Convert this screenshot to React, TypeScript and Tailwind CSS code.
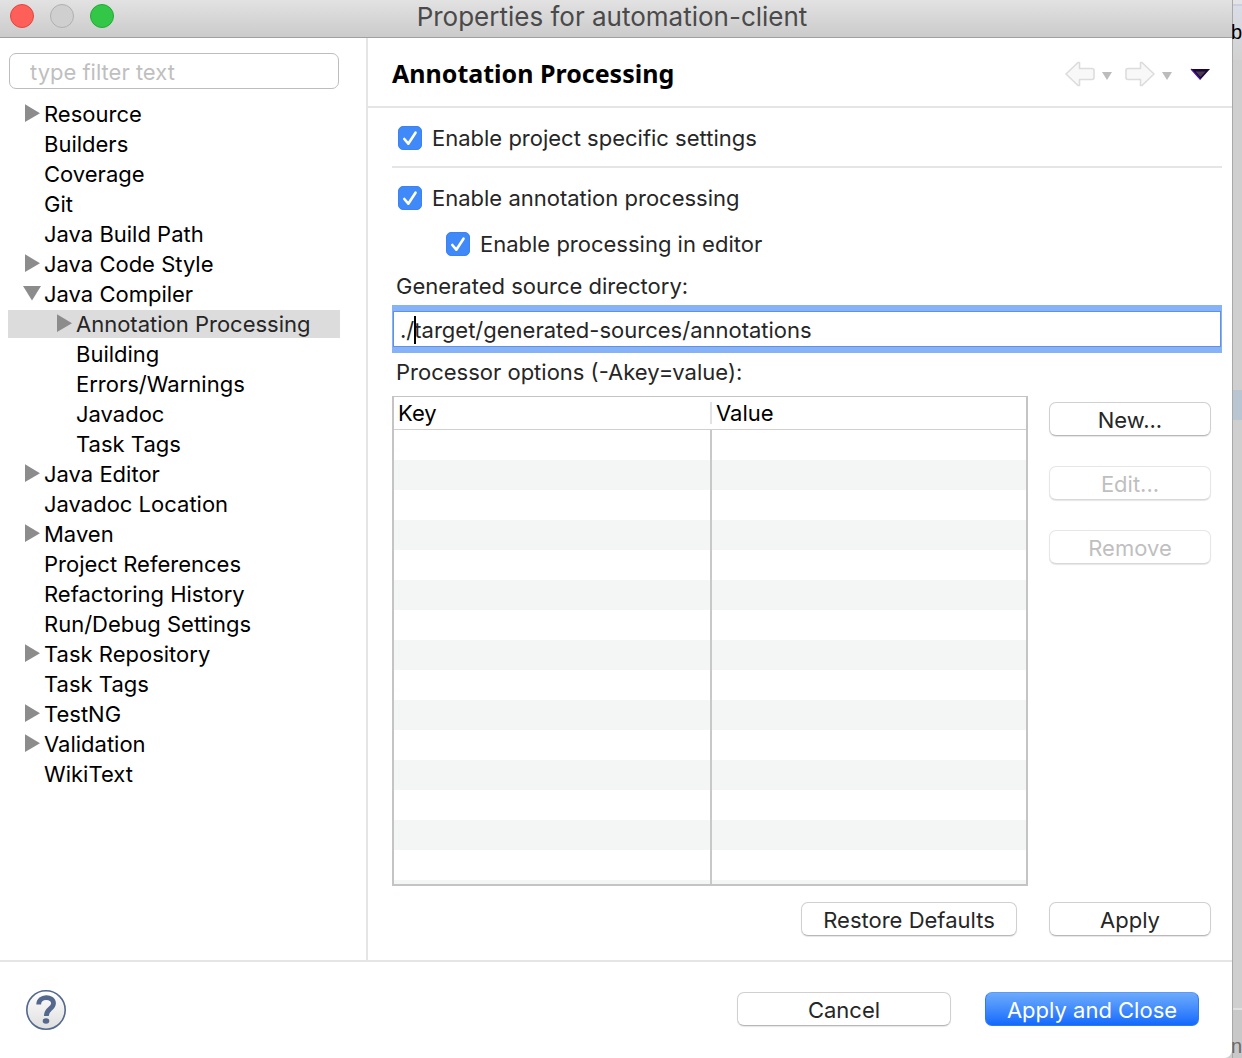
import React from "react";

type Node = { label: string; level?: number; state?: "closed" | "open"; selected?: boolean };

const tree: Node[] = [
  { label: "Resource", state: "closed" },
  { label: "Builders" },
  { label: "Coverage" },
  { label: "Git" },
  { label: "Java Build Path" },
  { label: "Java Code Style", state: "closed" },
  { label: "Java Compiler", state: "open" },
  { label: "Annotation Processing", level: 1, state: "closed", selected: true },
  { label: "Building", level: 1 },
  { label: "Errors/Warnings", level: 1 },
  { label: "Javadoc", level: 1 },
  { label: "Task Tags", level: 1 },
  { label: "Java Editor", state: "closed" },
  { label: "Javadoc Location" },
  { label: "Maven", state: "closed" },
  { label: "Project References" },
  { label: "Refactoring History" },
  { label: "Run/Debug Settings" },
  { label: "Task Repository", state: "closed" },
  { label: "Task Tags" },
  { label: "TestNG", state: "closed" },
  { label: "Validation", state: "closed" },
  { label: "WikiText" },
];

function Disclosure({ state }: { state?: "closed" | "open" }) {
  return (
    <svg viewBox="0 0 20 28" className="h-7 w-5 shrink-0 overflow-visible" aria-hidden="true">
      {state === "closed" && <path d="M1 4.300 L16 13.200 L1 22Z" fill="#8c8c8c" />}
      {state === "open" && <path d="M-1 6 L17 6 L8 20.500Z" fill="#8c8c8c" />}
    </svg>
  );
}

function Check({ id, label }: { id: string; label: string }) {
  return (
    <div className="flex h-6 items-center gap-[10px]">
      <span className="relative block size-6">
        <input
          id={id}
          type="checkbox"
          defaultChecked
          className="peer block size-6 appearance-none rounded-[5px] border border-[#b9b9b9] bg-white checked:border-[#3b82f2] checked:bg-[#3f89f8]"
        />
        <svg viewBox="0 0 24 24" className="pointer-events-none absolute inset-0 hidden size-6 peer-checked:block" aria-hidden="true">
          <path d="M6.300 13 L10.300 17.700 L17.500 6.700" fill="none" stroke="#fff" strokeWidth="2.600" strokeLinecap="round" strokeLinejoin="round" />
        </svg>
      </span>
      <label htmlFor={id} className="whitespace-nowrap">
        {label}
      </label>
    </div>
  );
}

function PushButton({ children, className, disabled }: { children: React.ReactNode; className: string; disabled?: boolean }) {
  return (
    <button
      type="button"
      disabled={disabled}
      className={
        "flex h-[34px] items-center justify-center whitespace-nowrap rounded-[7px] border border-[#d0d0d0] border-b-[#b8b8b8] bg-white pt-[2px] text-[#262626] shadow-[0_1px_1px_rgba(0,0,0,0.1)] disabled:border-[#e6e6e6] disabled:border-b-[#d8d8d8] disabled:text-[#bfbfbf] " +
        className
      }
    >
      {children}
    </button>
  );
}

function HistoryArrow({ label, flip }: { label: string; flip?: boolean }) {
  return (
    <button type="button" disabled aria-label={label} className="flex h-7 items-center">
      <svg viewBox="0 0 48 28" className="h-7 w-12" aria-hidden="true">
        <path
          d="M1 14 L13 2.500 H14.500 V8.500 H27 Q29 8.500 29 10.500 V17.500 Q29 19.500 27 19.500 H14.500 V25.500 H13 Z"
          transform={flip ? "translate(30 0) scale(-1 1)" : undefined}
          fill="#f8f8f8"
          stroke="#dcdcdc"
          strokeWidth="1.600"
          strokeLinejoin="round"
        />
        <path d="M37 12 H47 L42 20Z" fill="#bcbcbc" />
      </svg>
    </button>
  );
}

export default function App() {
  return (
    <div className="flex min-h-screen bg-[#cfcfcf] font-['Inter','Liberation_Sans',sans-serif] text-[22px] leading-7 text-[#262626]">
      <div className="flex min-w-0 flex-1 flex-col rounded-br-lg bg-white">
        <header className="relative flex h-[38px] items-center justify-center border-b border-[#a0a0a0] bg-linear-to-b from-[#e2e2e2] to-[#cbcbcb]">
          <div className="absolute left-[10px] top-1 flex gap-4">
            <button type="button" aria-label="Close" className="size-6 rounded-full border border-[#e2463f] bg-[#fe5f58]" />
            <button type="button" aria-label="Minimize" className="size-6 rounded-full border border-[#b0b0b0] bg-[#cfcfcf]" />
            <button type="button" aria-label="Zoom" className="size-6 rounded-full border border-[#23aa35] bg-[#33c748]" />
          </div>
          <h1 className="pb-1 pr-2 text-[26px] leading-8 text-[#4a4a4a]">Properties for automation-client</h1>
        </header>

        <div className="flex flex-1 border-b-2 border-[#e5e5e5]">
          <nav aria-label="Property pages" className="w-[368px] shrink-0 border-r-2 border-[#e5e5e5] pt-[15px]">
            <input
              type="text"
              aria-label="Filter"
              placeholder="type filter text"
              className="ml-[9px] block h-9 w-[330px] rounded-[7px] border border-[#bdbdbd] bg-white pl-5 pt-[2px] outline-none placeholder:text-[#bfbfbf]"
            />
            <ul className="ml-2 mt-[11px] mr-[26px] text-black">
              {tree.map((n, i) => (
                <li key={i} className="mb-[2px]">
                  <a
                    href="#"
                    aria-current={n.selected ? "page" : undefined}
                    className={
                      "flex h-7 items-center whitespace-nowrap " +
                      (n.level ? "pl-12 " : "pl-4 ") +
                      (n.selected ? "bg-[#dcdcdc] text-[#262626]" : "")
                    }
                  >
                    <Disclosure state={n.state} />
                    {n.label}
                  </a>
                </li>
              ))}
            </ul>
          </nav>

          <main className="flex min-w-0 flex-1 flex-col">
            <div className="flex h-[70px] items-center justify-between border-b-2 border-[#e5e5e5] pl-6 pr-[21px]">
              <h2 className="pt-[2px] font-['Noto_Sans',sans-serif] text-[25px] font-bold leading-8 text-black">Annotation Processing</h2>
              <div className="flex items-center gap-3 pt-1">
                <HistoryArrow label="Back" />
                <HistoryArrow label="Forward" flip />
                <button type="button" aria-label="Menu" className="ml-1 flex h-7 items-center">
                  <svg viewBox="0 0 22 28" className="h-7 w-[22px]" aria-hidden="true">
                    <path d="M2 9 H21 L11.500 19.500Z" fill="#1c0634" />
                    <path d="M2 9 L11.500 19.500" stroke="#4a10a8" strokeWidth="1.200" />
                    <path d="M6.500 11.500 H16.500 L11.500 17Z" fill="#4a3a52" />
                  </svg>
                </button>
              </div>
            </div>

            <div className="flex flex-1 flex-col pb-6 pl-6 pr-[10px] pt-[18px]">
              <div className="border-b-2 border-[#e5e5e5] pb-4 pl-[6px]">
                <Check id="project" label="Enable project specific settings" />
              </div>
              <div className="pl-[6px] pt-[18px]">
                <Check id="annotation" label="Enable annotation processing" />
              </div>
              <div className="pl-[54px] pt-[22px]">
                <Check id="editor" label="Enable processing in editor" />
              </div>

              <label htmlFor="dir" className="mt-4 pl-1">
                Generated source directory:
              </label>
              <div className="relative mt-[5px] bg-[#86b2f8] px-px py-[6px]">
                <input
                  id="dir"
                  type="text"
                  defaultValue="./target/generated-sources/annotations"
                  className="block h-9 w-full border border-[#5f92e2] bg-white pl-[6px] pt-[2px] outline-none"
                />
                <span className="absolute left-[22px] top-[11px] h-7 w-[2px] bg-black" />
              </div>
              <p className="mt-[5px] pl-1">Processor options (-Akey=value):</p>

              <div className="mt-[10px] flex flex-1">
                <div className="flex min-w-0 flex-1 flex-col border-2 border-t border-[#c4c4c4]">
                  <table className="w-full flex-1 table-fixed border-separate border-spacing-0 text-left text-black">
                    <thead>
                      <tr className="h-[33px]">
                        <th className="border-b border-[#d0d0d0] p-0 pl-1 font-normal">Key</th>
                        <th className="border-b border-[#d0d0d0] p-0 font-normal">
                          <span className="block h-[22px] border-l-2 border-[#e2e2e2] pl-1 leading-[22px]">Value</span>
                        </th>
                      </tr>
                    </thead>
                    <tbody>
                      {Array.from({ length: 15 }, (_, i) => (
                        <tr key={i} className="h-[30px] even:bg-[#f4f5f5]">
                          <td className="p-0" />
                          <td className="border-l-2 border-[#c8c8c8] p-0" />
                        </tr>
                      ))}
                      <tr className="h-1 bg-[#f4f5f5]">
                        <td className="p-0" />
                        <td className="border-l-2 border-[#c8c8c8] p-0" />
                      </tr>
                    </tbody>
                  </table>
                </div>
                <div className="ml-[21px] mr-[11px] mt-[6px] flex w-[162px] flex-col gap-[30px]">
                  <PushButton className="w-full">New...</PushButton>
                  <PushButton className="w-full" disabled>
                    Edit...
                  </PushButton>
                  <PushButton className="w-full" disabled>
                    Remove
                  </PushButton>
                </div>
              </div>

              <div className="mr-[11px] mt-4 flex justify-end gap-8">
                <PushButton className="w-[216px]">Restore Defaults</PushButton>
                <PushButton className="w-[162px]">Apply</PushButton>
              </div>
            </div>
          </main>
        </div>

        <footer className="flex h-24 items-center pl-[26px] pr-[33px]">
          <button type="button" aria-label="Help" className="size-10">
            <svg viewBox="0 0 40 40" className="size-10" aria-hidden="true">
              <defs>
                <linearGradient id="help" x1="0" y1="0" x2="0" y2="1">
                  <stop offset="0" stopColor="#ffffff" />
                  <stop offset="1" stopColor="#dedede" />
                </linearGradient>
              </defs>
              <circle cx="20" cy="20" r="19.200" fill="url(#help)" stroke="#53688c" strokeWidth="1.600" />
              <path d="M12.700 14.500 C12.700 5.500 27.500 5.500 27.500 13.300 C27.500 19 20.300 18.500 20.300 26" fill="none" stroke="#53688c" strokeWidth="4.800" />
              <ellipse cx="20" cy="31" rx="3.300" ry="2.800" fill="#53688c" />
            </svg>
          </button>
          <div className="ml-auto flex gap-[34px] pb-[2px]">
            <PushButton className="w-[214px]">Cancel</PushButton>
            <button
              type="button"
              className="flex h-[34px] w-[214px] items-center justify-center whitespace-nowrap rounded-[7px] border border-[#2f7af0] border-t-[#5b9bf7] bg-linear-to-b from-[#6caafa] to-[#1169fd] pt-[2px] text-white"
            >
              Apply and Close
            </button>
          </div>
        </footer>
      </div>

      <aside className="flex w-[10px] shrink-0 flex-col font-['Liberation_Sans',sans-serif] text-xl leading-7 text-black shadow-[inset_1px_0_0_#a8a8a8]">
        <div className="ml-px h-[6px] border-b-2 border-[#cdd0dc] bg-[#e4e4e8]" />
        <div className="ml-px h-[54px] bg-linear-to-b from-[#dadde6] to-[#d2d2d2] pt-3">
          <span className="-ml-[2px]">b</span>
        </div>
        <div className="ml-px mt-[330px] h-[30px] bg-[#bac5d2]" />
        <div className="ml-px mt-auto h-[50px] border-t-2 border-[#e0e0e0] bg-[#c8c8c8] pt-[22px] text-[#6a6a6a]">
          <span className="-ml-[2px]">n</span>
        </div>
      </aside>
    </div>
  );
}
